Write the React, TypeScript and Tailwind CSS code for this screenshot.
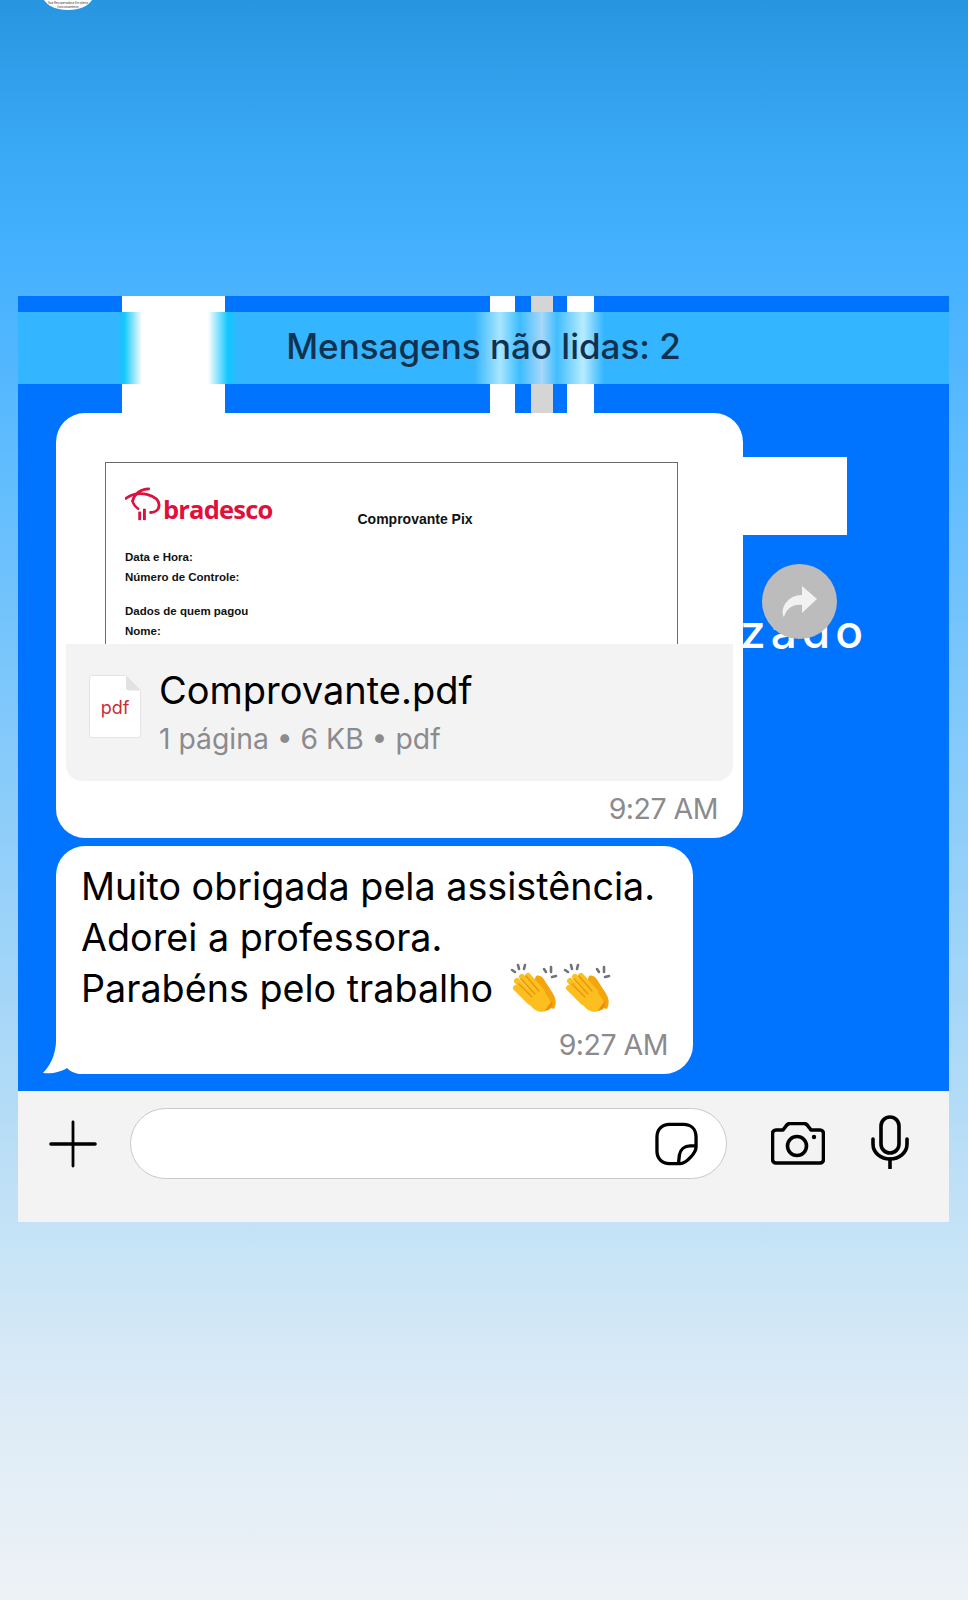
const SANS = "font-['Inter','Noto_Sans',sans-serif]";

function ClapEmoji({ className }: { className?: string }) {
  return (
    <svg viewBox="0 0 48 50" className={className}>
      {/* faiscas */}
      <g stroke="#6f747c" strokeWidth="2.600" strokeLinecap="round">
        <path d="M2 8l3 2M8 3l1 4M15 3l-1 4M34 7l2 3M41 5l0 5M46 14l-4 1" />
      </g>
      {/* mao de tras */}
      <path d="M26 14c3-1 5 0 7 2l9 14c4 6 5 11 2 17l-10-3-12-20z" fill="#f4a50d" />
      {/* mao da frente */}
      <g stroke="#fdbf1f" strokeWidth="6" strokeLinecap="round">
        <path d="M6 26l14 14M7 19l18 18M12 15l17 18M18 14l14 16" />
      </g>
      <path d="M20 24l12 2 9 14c1 3 0 6-2 8l-7 2c-5 0-9-3-13-8z" fill="#fdbf1f" />
      <path d="M34 49l6-2c2-2 3-5 2-8l-4 5c-1 2-3 4-4 5z" fill="#ee8f0b" />
      <path
        d="M9 22l13 13M11 17l14 15M16 14l13 15"
        stroke="#e8950a"
        strokeWidth="1.300"
        strokeLinecap="round"
        fill="none"
      />
    </svg>
  );
}

function FileIcon() {
  return (
    <div className="relative h-[63px] w-[52px] shrink-0">
      <svg viewBox="0 0 52 63" className="absolute inset-0 h-full w-full">
        <path
          d="M3 .5h34l14.5 15V60a2.500 2.500 0 0 1-2.500 2.500H3A2.500 2.500 0 0 1 .5 60V3A2.500 2.500 0 0 1 3 .5z"
          fill="#fff"
          stroke="#e4e3e5"
        />
        <path d="M37 .5v12a3 3 0 0 0 3 3h11.500z" fill="#e2e1e4" />
      </svg>
      <span className="absolute inset-x-0 top-[23px] text-center font-['Inter',sans-serif] text-[18px] leading-[20px] text-[#cc2b37]">
        pdf
      </span>
    </div>
  );
}

function BradescoLogo() {
  return (
    <div className="flex items-end">
      <svg viewBox="0 0 38 38" className="h-[38px] w-[36px] text-[#e0103c]">
        <g fill="none" stroke="currentColor" strokeLinecap="round">
          <path d="M1 13C8 8 16 7 24 9c7 2 12 6 12 11 0 5-4 8-9 8" strokeWidth="3" />
          <path d="M8 16c2-8 9-13 17-13" strokeWidth="3" />
          <path d="M8 16c1 4 3 6 6 8" strokeWidth="2.500" />
        </g>
        <rect x="14" y="27" width="3" height="9" fill="currentColor" />
        <rect x="19" y="24" width="3" height="12" fill="currentColor" />
      </svg>
      <span className="ml-[2px] -mb-[1px] font-['Open_Sans',sans-serif] text-[25.500px] leading-[30px] font-bold tracking-[-0.8px] text-[#e0103c]">
        bradesco
      </span>
    </div>
  );
}

function InputBar() {
  return (
    <div className="flex h-[131px] bg-[#f3f3f3] pt-[17px]">
      <div className="flex h-[71px] w-[112px] items-center justify-center pr-[2px]">
        <svg viewBox="0 0 48 48" className="h-[48px] w-[48px]" stroke="#000" strokeLinecap="round">
          <path d="M2 24h44" strokeWidth="3.600" />
          <path d="M24 2v44" strokeWidth="2.800" />
        </svg>
      </div>
      <div className="flex h-[71px] w-[597px] items-center justify-end rounded-[36px] border border-[#c9c9c9] bg-white pr-[28px]">
        <svg viewBox="0 0 44 44" className="h-[44px] w-[43px]" fill="none" stroke="#000" strokeWidth="3.400" strokeLinejoin="round">
          <path d="M15 2h14c8 0 13 5 13 13v10c0 6-10 17-16 17H15C7 42 2 37 2 29V15C2 7 7 2 15 2z" />
          <path d="M42 24h-6c-6 0-10 4-11 9l-1 9" />
        </svg>
      </div>
      <div className="flex h-[71px] items-center">
        <svg viewBox="0 0 54 43" className="ml-[44px] h-[43px] w-[54px]" fill="none" stroke="#000" strokeWidth="3.600" strokeLinejoin="round">
          <path d="M5 8h7l3-4c1-1.500 2-2.500 4-2.500h14c2 0 3 1 4 2.500l3 4h9c2 0 3.500 1.500 3.500 3.500v26c0 2-1.500 3.500-3.500 3.500H5c-2 0-3.500-1.500-3.500-3.500v-26C1.500 9.500 3 8 5 8z" />
          <circle cx="26" cy="24" r="9.500" />
          <circle cx="43" cy="15" r="2.200" fill="#000" stroke="none" />
        </svg>
        <svg viewBox="0 0 38 54" className="ml-[46px] -mt-[4px] h-[54px] w-[38px]" fill="none" stroke="#000" strokeWidth="3.600" strokeLinecap="round">
          <rect x="10" y="2" width="18" height="36" rx="9" />
          <path d="M2 24v5c0 9 8 15 17 15s17-6 17-15v-5" />
          <path d="M19 44v9" />
        </svg>
      </div>
    </div>
  );
}

export default function App() {
  return (
    <div className={`relative h-[1600px] w-[968px] overflow-hidden bg-[linear-gradient(180deg,#2895e0_0px,#3aa9f5_150px,#45b1ff_260px,#62bdfd_480px,#a5d6f8_1000px,#c6e3f6_1240px,#dcebf6_1400px,#eef2f6_1600px)] pt-[296px] pl-[18px] ${SANS}`}>
      {/* logo cortado no topo */}
      <div className="absolute top-[-18px] left-[43px] flex h-[28px] w-[50px] items-end justify-center rounded-[50%] bg-white pb-[1px] text-center text-[3px] leading-[3.500px] text-[#334]">
        Sua Recuperadora Em pleno
        <br />
        funcionamento
      </div>

      <div className="relative h-[795px] w-[931px] bg-[#0073ff]">
        {/* print de fundo, atras das mensagens */}
        <div className="absolute top-0 left-[104px] h-[120px] w-[103px] bg-white" />
        <div className="absolute top-0 left-[472px] h-[120px] w-[25px] bg-white" />
        <div className="absolute top-0 left-[513px] h-[120px] w-[22px] bg-[#d5d5d5]" />
        <div className="absolute top-0 left-[549px] h-[120px] w-[27px] bg-white" />
        <div className="absolute top-[161px] left-[700px] h-[78px] w-[129px] bg-white" />
        <span className="absolute top-[309px] left-[722px] text-[46px] leading-[52px] font-medium tracking-[5px] text-white">
          zado
        </span>
        <div className="absolute top-[268px] left-[744px] flex h-[75px] w-[75px] items-center justify-center rounded-full bg-[#bcbcbc]">
          <svg viewBox="0 0 36 32" className="h-[32px] w-[36px]" fill="#f2f2f2">
            <path d="M20 0l15 13-15 14v-8C11 18 5 22 2 31c-2-2-2-8 1-13 4-6 10-9 17-9z" />
          </svg>
        </div>

        <div className="relative flex flex-col">
          <div className="mt-[16px] flex h-[72px] items-center justify-center bg-[linear-gradient(90deg,#33b5ff_100px,#10c8ff_106px,#ffffff_124px,#ffffff_190px,#10c8ff_210px,#33b5ff_220px,#33b5ff_456px,#a8e6ff_482px,#3cbcff_502px,#a8d8fa_524px,#40bdff_539px,#b8ecff_565px,#33b5ff_586px)] pb-[4px]">
            <span className="text-[35px] leading-[40px] font-medium text-[#10314f]">Mensagens não lidas: 2</span>
          </div>

          <div className="mt-[29px] ml-[38px] w-[687px] rounded-[29px] bg-white p-[10px] pb-0">
            <div className="h-[221px] overflow-hidden pt-[39px] pl-[39px]">
              <div className="h-[200px] w-[573px] border border-[#6b6b6b] bg-white pt-[20px] pl-[19px] font-['Liberation_Sans',Arial,sans-serif] font-bold text-[#111]">
                <div className="flex h-[40px]">
                  <BradescoLogo />
                  <span className="mt-[27px] ml-[85px] text-[14px] leading-[18px]">Comprovante Pix</span>
                </div>
                <div className="mt-[24px] text-[11.500px] leading-[20px]">Data e Hora:</div>
                <div className="text-[11.500px] leading-[20px]">Número de Controle:</div>
                <div className="mt-[14px] text-[11.500px] leading-[20px]">Dados de quem pagou</div>
                <div className="text-[11.500px] leading-[20px]">Nome:</div>
              </div>
            </div>
            <div className="flex h-[137px] gap-[18px] rounded-b-[16px] bg-[#f4f3f4] pt-[31px] pl-[23px]">
              <FileIcon />
              <div className="-mt-[10px]">
                <div className="text-[38px] leading-[50px] text-black">Comprovante.pdf</div>
                <div className="text-[28.300px] leading-[48px] text-[#8b8b8e]">1 página • 6 KB • pdf</div>
              </div>
            </div>
            <div className="h-[57px] pt-[8px] pr-[15px] text-right text-[28.500px] leading-[40px] tracking-[-0.5px] text-[#8b8b8e]">9:27 AM</div>
          </div>

          <div className="relative mt-[8px] ml-[38px] w-[637px]">
            <svg viewBox="0 0 40 40" className="absolute bottom-0 left-[-13px] h-[40px] w-[40px]" fill="#fff">
              <path d="M13 0c1 15-3 29-13 39 9 1 18-1 24-5 4 4 9 6 16 6V0z" />
            </svg>
            <div className="relative h-[228px] rounded-[29px] bg-white pt-[15px] pl-[25px] text-[37.700px] leading-[51px] text-black">
              <div>Muito obrigada pela assistência.</div>
              <div>Adorei a professora.</div>
              <div className="flex items-start">
                Parabéns pelo trabalho
                <ClapEmoji className="ml-[17px] -mt-[1px] h-[50px] w-[48px]" />
                <ClapEmoji className="ml-[5px] -mt-[1px] h-[50px] w-[48px]" />
              </div>
              <div className="mt-[11px] pr-[25px] text-right text-[28.500px] leading-[40px] tracking-[-0.5px] text-[#8b8b8e]">9:27 AM</div>
            </div>
          </div>
        </div>
      </div>

      <div className="w-[931px]">
        <InputBar />
      </div>
    </div>
  );
}
